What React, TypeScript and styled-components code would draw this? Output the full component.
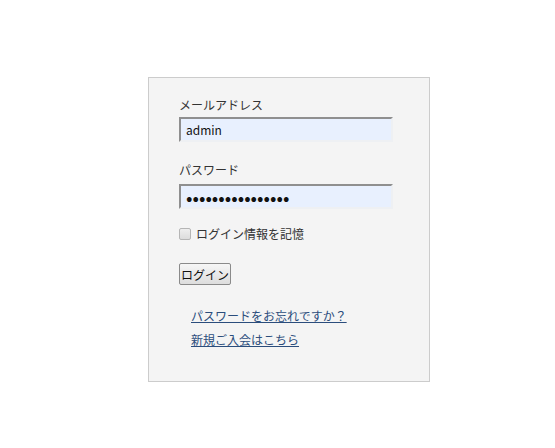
import React, { useState, ChangeEvent } from 'react';
import { styled, createGlobalStyle } from 'styled-components';

const GlobalStyle = createGlobalStyle`
  body {
    margin: 0;
    background: #ffffff;
    font-family: "Noto Sans CJK JP", "Noto Sans", sans-serif;
    color: #333333;
  }
`;

const Page = styled.div`
  padding: 77px 0 0 148px;
`;

const Card = styled.form`
  width: 282px;
  box-sizing: border-box;
  background: #f4f4f4;
  border: 1px solid #cccccc;
  padding: 18px 36px 29px 30px;
  display: flex;
  flex-direction: column;
`;

const Label = styled.label<{ $mb?: number }>`
  font-size: 12px;
  line-height: 18px;
  color: #333333;
  margin-bottom: ${(p) => p.$mb ?? 3}px;
`;

const Input = styled.input<{ $gap?: number }>`
  box-sizing: border-box;
  width: 214px;
  height: 25px;
  margin: 0 0 ${(p) => p.$gap ?? 0}px 0;
  padding: 0 0 0 5px;
  font-family: "Noto Sans CJK JP", "Noto Sans", sans-serif;
  font-size: ${(p) => (p.type === 'password' ? '19px' : '12px')};
  color: #111111;
  background: #e8f0fe;
  border-style: solid;
  border-width: 2px;
  border-color: #8f8f8f #eef0f3 #eef0f3 #8f8f8f;
  outline: none;
`;

const CheckRow = styled.label`
  display: flex;
  align-items: center;
  gap: 5px;
  font-size: 12px;
  line-height: 18px;
  margin-bottom: 20px;
`;

const Check = styled.input.attrs({ type: 'checkbox' })`
  appearance: none;
  margin: 0;
  width: 12px;
  height: 12px;
  border: 1px solid #b5b5b5;
  border-radius: 2px;
  background: linear-gradient(#eeeeee, #dcdcdc);
  box-sizing: border-box;
`;

const Button = styled.button`
  align-self: flex-start;
  height: 22px;
  padding: 0 1px;
  font-family: "Noto Sans CJK JP", "Noto Sans", sans-serif;
  font-size: 12px;
  color: #111111;
  background: linear-gradient(#f6f6f6, #dddddd);
  border: 1px solid #8a8a8a;
  border-radius: 2px;
  margin-bottom: 19px;
`;

const Links = styled.div`
  display: flex;
  flex-direction: column;
  padding-left: 12px;
`;

const Link = styled.a`
  font-size: 12px;
  line-height: 24px;
  color: #2b4d7c;
  text-decoration: underline;
  align-self: flex-start;
`;

const App = () => {
  const [email, setEmail] = useState('admin');
  const [password, setPassword] = useState('passwordpasswor1');
  return (
    <Page>
      <GlobalStyle />
      <Card onSubmit={(e) => e.preventDefault()}>
        <Label>メールアドレス</Label>
        <Input
          type='text'
          value={email}
          $gap={19}
          onChange={(e: ChangeEvent<HTMLInputElement>) => setEmail(e.target.value)}
        />
        <Label $mb={5}>パスワード</Label>
        <Input
          type='password'
          value={password}
          $gap={16}
          onChange={(e: ChangeEvent<HTMLInputElement>) => setPassword(e.target.value)}
        />
        <CheckRow>
          <Check />
          ログイン情報を記憶
        </CheckRow>
        <Button type='submit'>ログイン</Button>
        <Links>
          <Link href='#'>パスワードをお忘れですか？</Link>
          <Link href='#'>新規ご入会はこちら</Link>
        </Links>
      </Card>
    </Page>
  );
};

export default App;
